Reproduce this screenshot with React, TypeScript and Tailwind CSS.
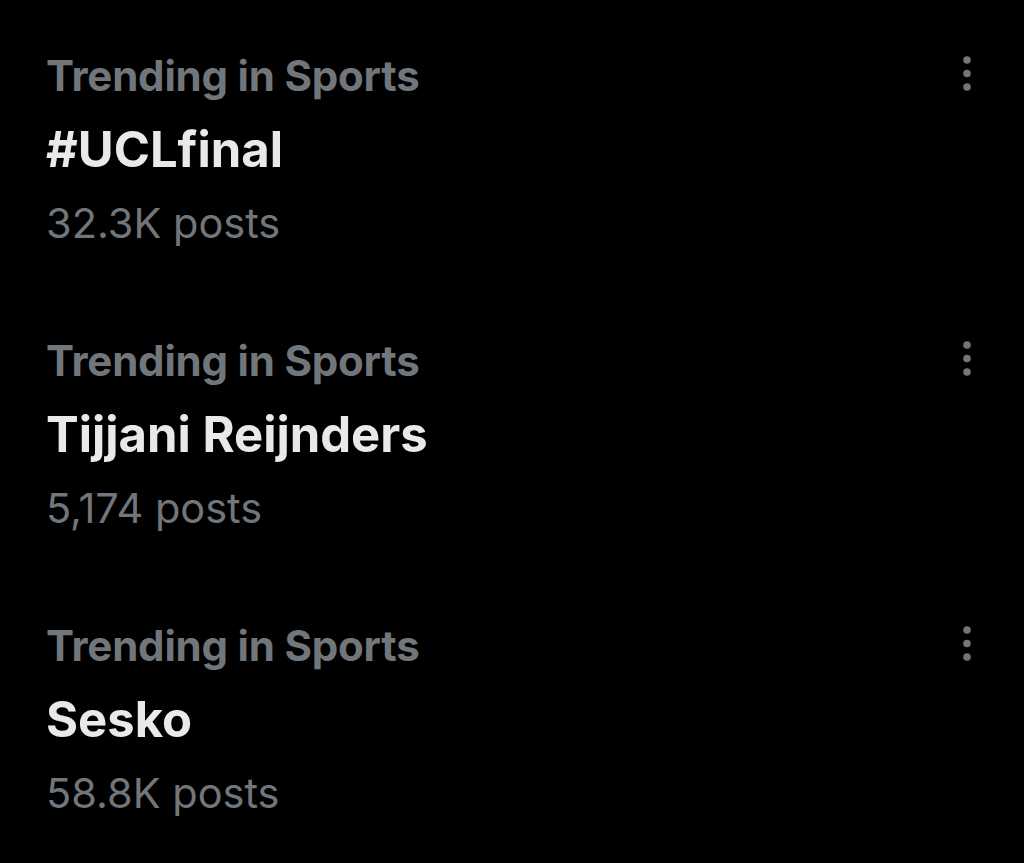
const trends = [
  { label: "Trending in Sports", title: "#UCLfinal", posts: "32.3K posts" },
  { label: "Trending in Sports", title: "Tijjani Reijnders", posts: "5,174 posts" },
  { label: "Trending in Sports", title: "Sesko", posts: "58.8K posts" },
]

function MoreIcon() {
  return (
    <svg width="14" height="40" viewBox="0 0 14 40" fill="#71767b">
      <circle cx="7" cy="5" r="3.8" />
      <circle cx="7" cy="18.5" r="3.8" />
      <circle cx="7" cy="32" r="3.8" />
    </svg>
  )
}

export default function App() {
  return (
    <div className="w-[1024px] h-[863px] bg-black pt-[46px] font-['Inter',sans-serif] overflow-hidden">
      {trends.map((t, i) => (
        <div key={i} className="flex justify-between pl-[46px] pr-[50px] h-[285px]">
          <div className="flex flex-col">
            <div className="text-[42px] leading-[60px] font-bold text-[#71767b] tracking-[-0.2px]">{t.label}</div>
            <div className="text-[49px] leading-[88px] font-bold text-[#e7e9ea]">{t.title}</div>
            <div className="text-[41.5px] leading-[58px] text-[#71767b]">{t.posts}</div>
          </div>
          <div className="pt-[9px]">
            <MoreIcon />
          </div>
        </div>
      ))}
    </div>
  )
}
